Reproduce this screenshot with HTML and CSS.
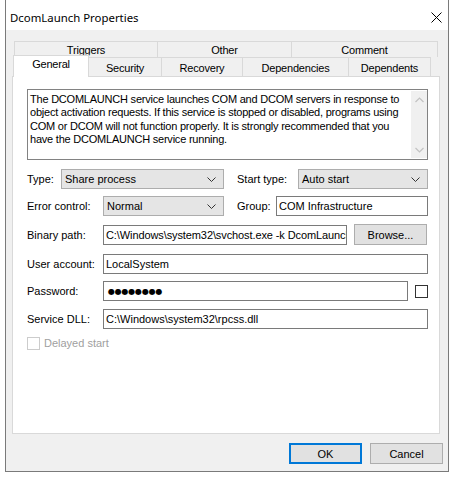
FILE: index.html
```html
<!DOCTYPE html>
<html>
<head>
<meta charset="utf-8">
<link rel="stylesheet" href="styles.css">
</head>
<body>
<div class="window">
  <div class="titlebar">
    <span class="title">DcomLaunch Properties</span>
    <svg class="close" width="11" height="11" viewBox="0 0 11 11"><path d="M0.5 0.5 L10.5 10.5 M10.5 0.5 L0.5 10.5" stroke="#000" stroke-width="1" fill="none"/></svg>
  </div>
  <div class="client">
    <div class="tabstrip">
      <div class="tabrow row-top">
        <div class="tab t-triggers">Triggers</div>
        <div class="tab t-other">Other</div>
        <div class="tab t-comment">Comment</div>
      </div>
      <div class="tabrow row-bottom">
        <div class="tab selected t-general">General</div>
        <div class="tab t-security">Security</div>
        <div class="tab t-recovery">Recovery</div>
        <div class="tab t-deps">Dependencies</div>
        <div class="tab t-dependents">Dependents</div>
      </div>
    </div>
    <div class="panel">
      <div class="desc">
        <div class="desc-text">The DCOMLAUNCH service launches COM and DCOM servers in response to object activation requests. If this service is stopped or disabled, programs using COM or DCOM will not function properly. It is strongly recommended that you have the DCOMLAUNCH service running.</div>
        <div class="scrollbar">
          <svg width="9" height="6" viewBox="0 0 9 6"><polyline points="0.5,5 4.5,1 8.5,5" fill="none" stroke="#c2c2c2" stroke-width="1.2"/></svg>
          <svg width="9" height="6" viewBox="0 0 9 6"><polyline points="0.5,1 4.5,5 8.5,1" fill="none" stroke="#c2c2c2" stroke-width="1.2"/></svg>
        </div>
      </div>

      <div class="row r-type">
        <span class="lbl lbl-type">Type:</span>
        <div class="combo c-type"><span>Share process</span><svg width="9" height="5" viewBox="0 0 9 5"><polyline points="0.5,0.5 4.5,4.5 8.5,0.5" fill="none" stroke="#333" stroke-width="1"/></svg></div>
        <span class="lbl lbl-start">Start type:</span>
        <div class="combo c-start"><span>Auto start</span><svg width="9" height="5" viewBox="0 0 9 5"><polyline points="0.5,0.5 4.5,4.5 8.5,0.5" fill="none" stroke="#333" stroke-width="1"/></svg></div>
      </div>

      <div class="row r-error">
        <span class="lbl lbl-wide">Error control:</span>
        <div class="combo c-error"><span>Normal</span><svg width="9" height="5" viewBox="0 0 9 5"><polyline points="0.5,0.5 4.5,4.5 8.5,0.5" fill="none" stroke="#333" stroke-width="1"/></svg></div>
        <span class="lbl lbl-group">Group:</span>
        <div class="field f-group">COM Infrastructure</div>
      </div>

      <div class="row r-binary">
        <span class="lbl lbl-wide">Binary path:</span>
        <div class="field f-binary"><span class="clip">C:\Windows\system32\svchost.exe -k DcomLaunch -p</span></div>
        <div class="button b-browse">Browse...</div>
      </div>

      <div class="row r-user">
        <span class="lbl lbl-wide">User account:</span>
        <div class="field f-full">LocalSystem</div>
      </div>

      <div class="row r-pass">
        <span class="lbl lbl-wide">Password:</span>
        <div class="field f-pass"><span class="dots">●●●●●●●●</span></div>
        <div class="check"></div>
      </div>

      <div class="row r-dll">
        <span class="lbl lbl-wide">Service DLL:</span>
        <div class="field f-full">C:\Windows\system32\rpcss.dll</div>
      </div>

      <div class="row r-delayed">
        <div class="check disabled"></div>
        <span class="lbl-disabled">Delayed start</span>
      </div>
    </div>
    <div class="buttons">
      <div class="button default">OK</div>
      <div class="button">Cancel</div>
    </div>
  </div>
</div>
</body>
</html>
```

FILE: styles.css
```css
html, body {
  margin: 0;
  padding: 0;
  background: #ffffff;
}
body {
  font-family: "Liberation Sans", Arial, sans-serif;
  font-size: 11px;
  color: #000;
}
.window {
  margin-left: 5px;
  width: 444px;
  height: 472px;
  box-sizing: border-box;
  border-left: 1px solid #7a7a7a;
  border-right: 1px solid #7a7a7a;
  border-bottom: 1px solid #7a7a7a;
  background: #f0f0f0;
  display: flex;
  flex-direction: column;
}
.titlebar {
  height: 30px;
  box-sizing: border-box;
  padding: 4px 6px 0 4px;
  background: #ffffff;
  display: flex;
  align-items: center;
  justify-content: space-between;
}
.title {
  font-family: "Noto Sans", "Open Sans", sans-serif;
  font-size: 11.4px;
  color: #000;
}
.close {
  display: block;
}
.client {
  padding: 11px 0 0 6px;
  display: flex;
  flex-direction: column;
}
.tabstrip {
  display: flex;
  flex-direction: column;
}
.tabrow {
  display: flex;
  align-items: flex-end;
}
.row-top {
  margin-left: 2px;
  height: 16px;
}
.row-bottom {
  height: 19px;
  margin-left: 1px;
}
.tab {
  box-sizing: border-box;
  border: 1px solid #d9d9d9;
  border-bottom: none;
  background: #f0f0f0;
  text-align: center;
  margin-right: -1px;
  letter-spacing: -0.2px;
}
.row-top .tab {
  height: 16px;
  line-height: 16px;
}
.row-bottom .tab {
  height: 19px;
  line-height: 20px;
}
.row-bottom .tab.selected {
  position: relative;
  z-index: 1;
  height: 22px;
  margin-bottom: -1px;
  background: #ffffff;
  line-height: 17px;
}
.t-triggers { width: 144px; }
.t-other { width: 135px; }
.t-comment { width: 147px; }
.t-general { width: 76px; }
.t-security { width: 74px; }
.t-recovery { width: 82px; }
.t-deps { width: 107px; }
.t-dependents { width: 83px; }

.panel {
  width: 428px;
  height: 358px;
  box-sizing: border-box;
  border: 1px solid #d9d9d9;
  background: #ffffff;
  padding: 12px 11px 0 14px;
  display: flex;
  flex-direction: column;
}
.desc {
  width: 401px;
  height: 71px;
  box-sizing: border-box;
  border: 1px solid #828282;
  display: flex;
}
.desc-text {
  flex: 1;
  padding: 3px 0 0 2px;
  line-height: 13.3px;
  letter-spacing: -0.22px;
}
.scrollbar {
  width: 16px;
  margin: 1px 0 1px 0;
  background: #f0f0f0;
  display: flex;
  flex-direction: column;
  justify-content: space-between;
  align-items: center;
  padding: 6px 0 5px 0;
}
.scrollbar svg { display: block; }

.row {
  display: flex;
  align-items: center;
  height: 20px;
}
.r-type { margin-top: 9px; }
.r-error { margin-top: 7px; }
.r-binary { margin-top: 8px; height: 21px; }
.r-user { margin-top: 9px; }
.r-pass { margin-top: 7px; }
.r-dll { margin-top: 8px; }
.r-delayed { margin-top: 7px; height: 14px; }

.lbl { white-space: nowrap; }
.lbl-type { width: 34px; }
.lbl-wide { width: 76px; }
.lbl-start { width: 61px; margin-left: 13px; }
.lbl-group { width: 39px; margin-left: 13px; }

.combo {
  height: 20px;
  box-sizing: border-box;
  border: 1px solid #adadad;
  background: #e5e5e5;
  display: flex;
  align-items: center;
  justify-content: space-between;
  padding: 0 7px 0 3px;
}
.combo svg { display: block; }
.c-type { width: 163px; }
.c-start { width: 130px; }
.c-error { width: 121px; }

.field {
  height: 20px;
  box-sizing: border-box;
  border: 1px solid #7a7a7a;
  background: #ffffff;
  padding: 0 2px 0 2px;
  display: flex;
  align-items: center;
  overflow: hidden;
  white-space: nowrap;
}
.clip {
  letter-spacing: -0.1px;
}
.f-group { width: 152px; }
.f-binary { width: 244px; }
.f-full { width: 325px; }
.f-pass { width: 305px; }
.dots {
  font-family: "DejaVu Sans", sans-serif;
  font-size: 8px;
  letter-spacing: -0.2px;
  padding-left: 2px;
}

.button {
  width: 73px;
  height: 21px;
  box-sizing: border-box;
  border: 1px solid #adadad;
  background: #e1e1e1;
  display: flex;
  align-items: center;
  justify-content: center;
}
.b-browse { margin-left: 7px; }
.button.default {
  border: 2px solid #0078d7;
}

.check {
  width: 13px;
  height: 13px;
  box-sizing: border-box;
  border: 1px solid #333333;
  background: #ffffff;
  margin-left: 7px;
}
.check.disabled {
  margin-left: 0;
  border-color: #cccccc;
}
.lbl-disabled {
  color: #a0a0a0;
  margin-left: 4px;
}

.buttons {
  display: flex;
  justify-content: flex-end;
  gap: 8px;
  padding: 9px 5px 0 0;
}
```
